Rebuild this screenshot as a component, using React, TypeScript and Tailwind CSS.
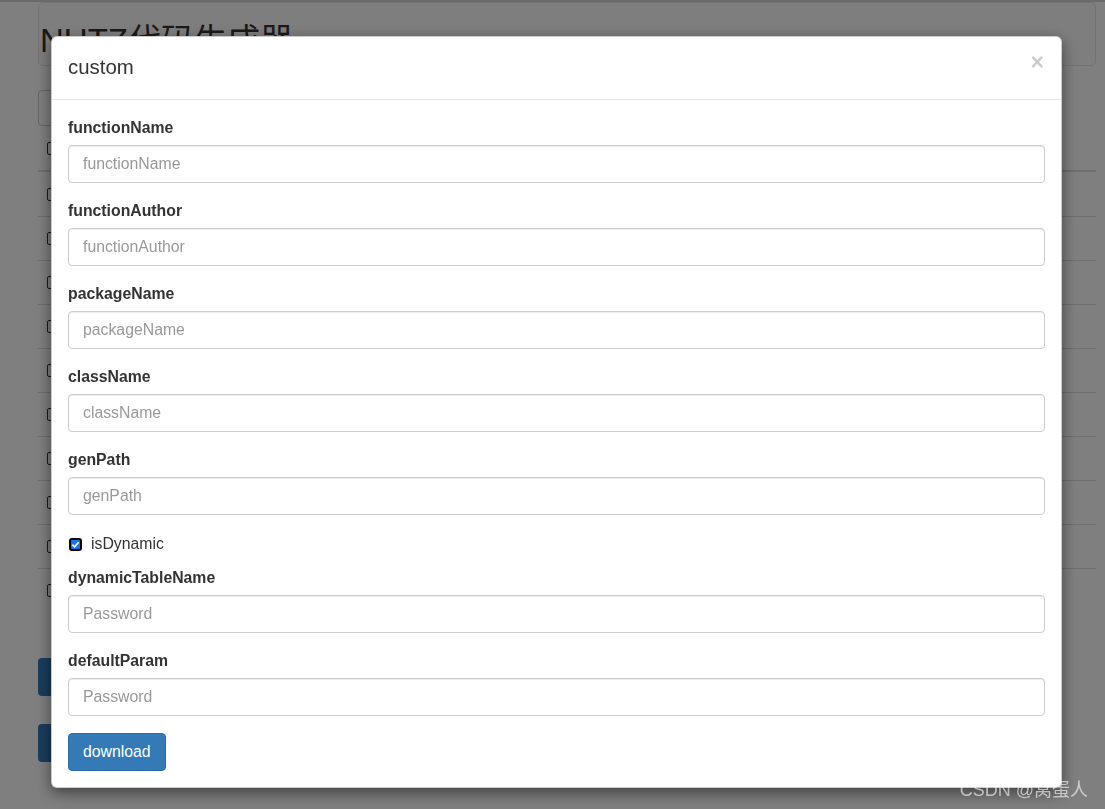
import React from 'react';

const fields = [
  { label: 'functionName', placeholder: 'functionName' },
  { label: 'functionAuthor', placeholder: 'functionAuthor' },
  { label: 'packageName', placeholder: 'packageName' },
  { label: 'className', placeholder: 'className' },
  { label: 'genPath', placeholder: 'genPath' },
];

const extraFields = [
  { label: 'dynamicTableName', placeholder: 'Password' },
  { label: 'defaultParam', placeholder: 'Password' },
];

function Field({ label, placeholder }: { label: string; placeholder: string }) {
  return (
    <div className="mb-[17px]">
      <label className="block mb-[6px] text-[15.8px] leading-[22px] font-bold text-[#333]">{label}</label>
      <input
        type="text"
        placeholder={placeholder}
        className="block w-full h-[38px] px-[14px] border border-[#ccc] rounded-[4px] text-[15.8px] text-[#555] placeholder:text-[#999] shadow-[inset_0_1px_1px_rgba(0,0,0,0.075)] outline-none"
      />
    </div>
  );
}

// page behind the modal, dimmed by the backdrop
function BackgroundPage() {
  const rows = Array.from({ length: 10 });
  return (
    <div className="border-t-2 border-[#d4d4d4] px-[38px] pr-[9px]">
      <div className="h-[64px] border border-[#e7e7e7] bg-[#fdfdfd] rounded-[5px] flex items-end pl-[1px] pb-[8px]">
        <h1 className="text-[33px] leading-none text-[#333]">NUTZ代码生成器</h1>
      </div>
      <div className="mt-[24px] w-[300px] h-[36px] border border-[#ccc] rounded-[4px]" />
      <div>
        <div className="h-[46px] flex items-center pl-[9px] border-b-2 border-[#ddd]">
          <span className="w-[13px] h-[13px] border border-[#333] rounded-[2px] bg-white" />
        </div>
        {rows.map((_, i) => (
          <div key={i} className={`h-[44px] flex items-center pl-[9px] ${i > 0 ? 'border-t border-[#ddd]' : ''}`}>
            <span className="w-[13px] h-[13px] border border-[#333] rounded-[2px] bg-white" />
          </div>
        ))}
      </div>
      <div className="mt-[46px] flex flex-col gap-[28px]">
        <div className="w-[120px] h-[38px] bg-[#337ab7] rounded-[4px]" />
        <div className="w-[120px] h-[38px] bg-[#337ab7] rounded-[4px]" />
      </div>
    </div>
  );
}

export default function App() {
  return (
    <div className="relative w-full h-[809px] overflow-hidden bg-white font-['Liberation_Sans','Noto_Sans_CJK_SC',Arial,sans-serif]">
      <BackgroundPage />

      {/* Backdrop */}
      <div className="fixed inset-0 bg-black/50" />

      {/* Modal */}
      <div className="fixed inset-0">
        <div className="mt-[36px] ml-[51px] w-[1011px] bg-white border border-black/20 rounded-[6px] shadow-[0_5px_15px_rgba(0,0,0,0.5)]">
          <div className="h-[63px] px-[16px] flex items-center justify-between border-b border-[#e5e5e5]">
            <h4 className="text-[20.4px] text-[#333] leading-[28px] -mt-[2px]">custom</h4>
            <button className="text-[23px] font-bold leading-none text-black opacity-20 -mt-[12px] mr-[1px]">×</button>
          </div>
          <div className="px-[16px] pt-[17px] pb-[16px]">
            {fields.map((f) => (
              <Field key={f.label} {...f} />
            ))}
            <div className="pt-[1px] mb-[12px]">
              <div className="h-[22px] flex items-center">
                <span className="ml-[1px] w-[13px] h-[13px] rounded-[3px] border-2 border-black bg-[#1a73e8] flex items-center justify-center">
                  <svg viewBox="0 0 10 10" className="w-[9px] h-[9px]">
                    <path d="M1.5 5.2 L4 7.5 L8.5 2.5" stroke="white" strokeWidth="1.8" fill="none" />
                  </svg>
                </span>
                <span className="ml-[9px] text-[15.8px] text-[#333]">isDynamic</span>
              </div>
            </div>
            {extraFields.map((f) => (
              <Field key={f.label} {...f} />
            ))}
            <button className="h-[38px] px-[14px] bg-[#337ab7] border border-[#2e6da4] rounded-[4px] text-white text-[15.8px]">
              download
            </button>
          </div>
        </div>
      </div>

      {/* Watermark */}
      <div className="absolute right-[17px] bottom-[10px] text-[18px] text-white/60 leading-none">CSDN @窝蛋人</div>
    </div>
  );
}
